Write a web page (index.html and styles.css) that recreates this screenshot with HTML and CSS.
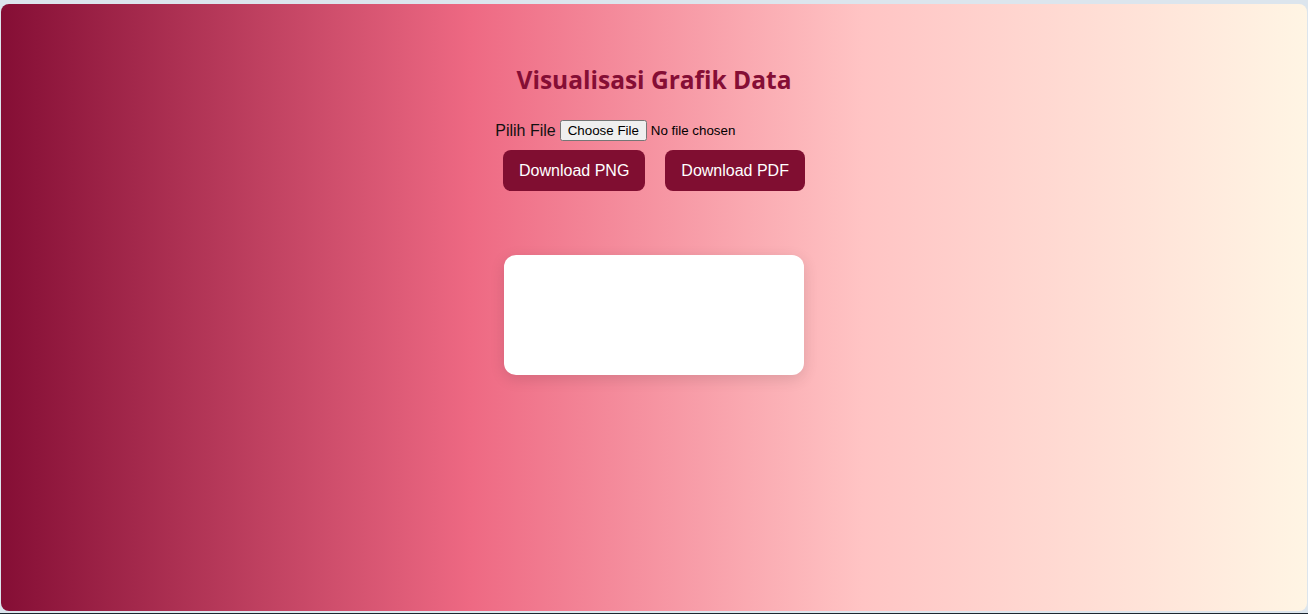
FILE: index.html
```html
<!DOCTYPE html>
<html lang="id">
<head>
<meta charset="utf-8">
<title>Visualisasi Grafik Data</title>
<link rel="stylesheet" href="styles.css">
</head>
<body>
<div class="frame">
  <main class="panel">
    <h2 class="title">Visualisasi Grafik Data</h2>
    <div class="upload">
      <label class="upload-label" for="file">Pilih File</label>
      <input class="upload-input" type="file" id="file">
    </div>
    <div class="actions">
      <button class="btn" type="button">Download PNG</button>
      <button class="btn" type="button">Download PDF</button>
    </div>
    <div class="chart-card"></div>
  </main>
</div>
</body>
</html>
```
FILE: styles.css
```css
html, body {
  margin: 0;
  padding: 0;
  height: 100%;
}
body {
  background: #dce5ed;
  font-family: "Liberation Sans", Arial, sans-serif;
}
.frame {
  box-sizing: border-box;
  height: 614px;
  padding: 4px 1px 2px 1px;
  border-bottom: 1px solid #1d2730;
  display: flex;
}
.panel {
  flex: 1;
  border-radius: 8px;
  background: linear-gradient(to right, #850e35 0%, #ee6983 36%, #ffc4c4 66%, #fff5e4 100%);
  display: flex;
  flex-direction: column;
  align-items: center;
  padding-top: 60px;
}
.title {
  margin: 0 0 24px;
  font-family: "Open Sans", sans-serif;
  font-weight: 700;
  font-size: 24.5px;
  line-height: 32px;
  color: #850e35;
}
.upload {
  display: flex;
  align-items: center;
  gap: 4px;
  height: 21px;
}
.upload-label {
  font-size: 16px;
  color: #111;
}
.upload-input {
  font-family: "Liberation Sans", Arial, sans-serif;
  font-size: 13.33px;
  color: #000;
}
.actions {
  display: flex;
  gap: 20px;
  margin-top: 9px;
}
.btn {
  border: none;
  border-radius: 8px;
  background: #800e31;
  color: #fff;
  font-family: "Liberation Sans", Arial, sans-serif;
  font-size: 16px;
  line-height: 19px;
  padding: 11px 16px;
  cursor: pointer;
}
.chart-card {
  margin-top: 64px;
  width: 300px;
  height: 120px;
  background: #fff;
  border-radius: 12px;
  box-shadow: 0 4px 15px rgba(0, 0, 0, 0.12);
}
```
